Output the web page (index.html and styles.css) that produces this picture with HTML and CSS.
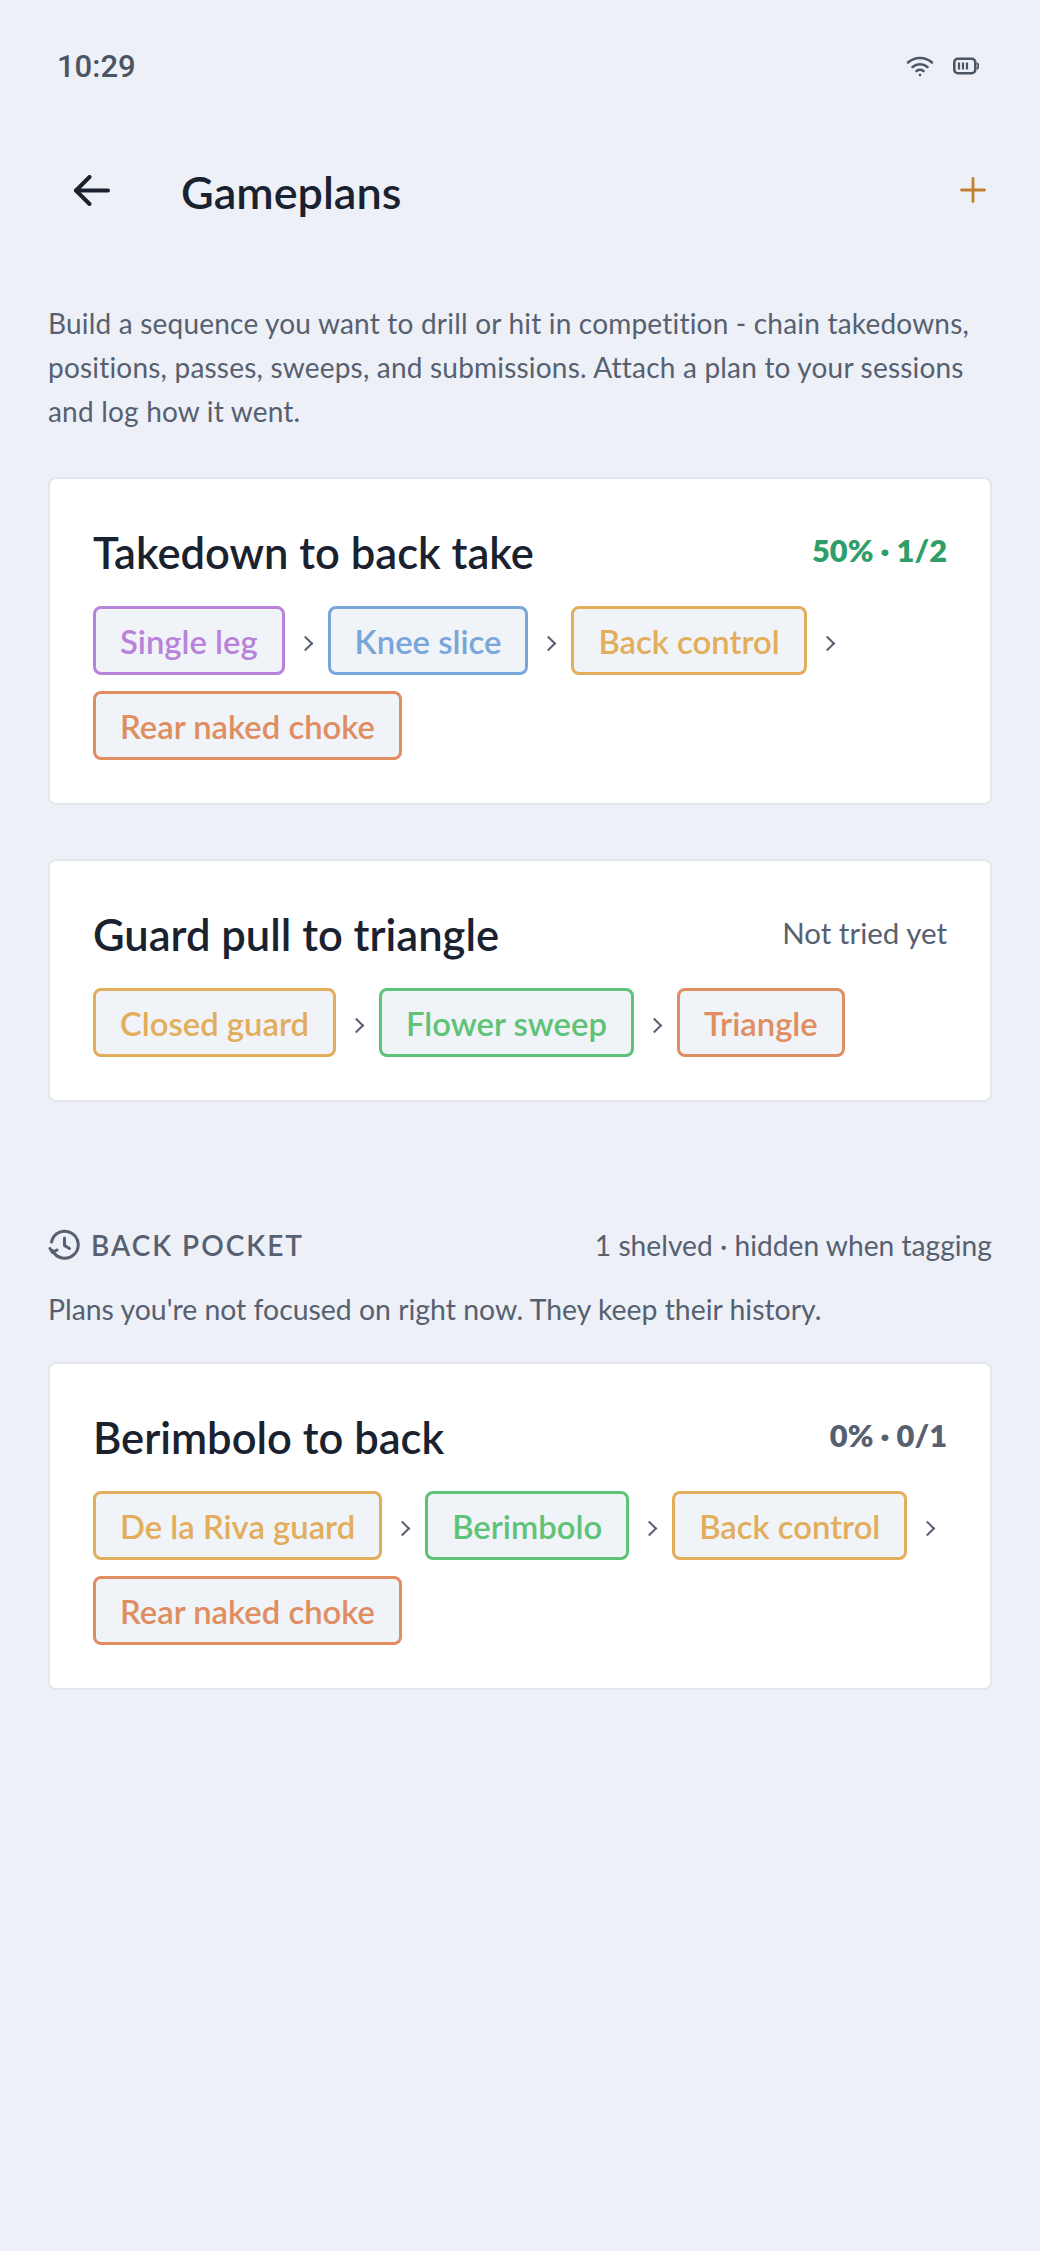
FILE: index.html
```html
<!DOCTYPE html>
<html lang="en">
<head>
  <meta charset="UTF-8" />
  <title>Gameplans</title>
  <link rel="stylesheet" href="styles.css">
</head>
<body>
  <div class="status-bar">
    <span class="time">10:29</span>
    <div class="status-icons">
      <svg width="28" height="22" viewBox="0 0 28 22" fill="none" stroke="#4b5563" stroke-width="2.6" stroke-linecap="round">
        <path d="M2 7.5C9 1.5 19 1.5 26 7.5"/>
        <path d="M6.5 12C11 8.3 17 8.3 21.500 12"/>
        <path d="M10.500 16C12.800 14.400 15.200 14.400 17.500 16"/>
        <circle cx="14" cy="20" r="1.300" fill="#4b5563" stroke="none"/>
      </svg>
      <svg width="26" height="18" viewBox="0 0 26 18" fill="none">
        <rect x="1.300" y="1.800" width="21" height="14.400" rx="3.500" stroke="#4b5563" stroke-width="2.600"/>
        <path d="M6 5.500V12.500M10 5.500V12.500M14 5.500V12.500" stroke="#4b5563" stroke-width="2.200"/>
        <path d="M24.600 6.500C25.500 8 25.500 10 24.600 11.500" stroke="#4b5563" stroke-width="1.800" stroke-linecap="round"/>
      </svg>
    </div>
  </div>

  <header class="top-bar">
    <div class="top-left">
      <svg class="back-icon" width="37" height="31" viewBox="0 0 37 31" fill="none" stroke="#1a2230" stroke-width="4" stroke-linecap="round" stroke-linejoin="round">
        <path d="M35 15.500H3"/>
        <path d="M16.500 2L3 15.500L16.500 29"/>
      </svg>
      <h1>Gameplans</h1>
    </div>
    <svg class="add-icon" width="26" height="26" viewBox="0 0 26 26" stroke="#c0802f" stroke-width="2.800" stroke-linecap="round">
      <path d="M13 1.500V24.500M1.500 13H24.500"/>
    </svg>
  </header>

  <p class="intro">Build a sequence you want to drill or hit in competition - chain takedowns, positions, passes, sweeps, and submissions. Attach a plan to your sessions and log how it went.</p>

  <section class="card">
    <div class="card-head">
      <h2>Takedown to back take</h2>
      <span class="stat stat-good">50% · 1/2</span>
    </div>
    <div class="chain">
      <div class="step"><span class="chip purple">Single leg</span><i class="sep"></i></div>
      <div class="step"><span class="chip blue">Knee slice</span><i class="sep"></i></div>
      <div class="step"><span class="chip yellow">Back control</span><i class="sep"></i></div>
      <div class="step"><span class="chip orange">Rear naked choke</span></div>
    </div>
  </section>

  <section class="card">
    <div class="card-head">
      <h2>Guard pull to triangle</h2>
      <span class="stat stat-none">Not tried yet</span>
    </div>
    <div class="chain">
      <div class="step"><span class="chip yellow">Closed guard</span><i class="sep"></i></div>
      <div class="step"><span class="chip green">Flower sweep</span><i class="sep"></i></div>
      <div class="step"><span class="chip orange">Triangle</span></div>
    </div>
  </section>

  <div class="pocket-head">
    <div class="pocket-title">
      <svg width="32" height="32" viewBox="0 0 32 32" fill="none" stroke="#566070" stroke-width="3" stroke-linecap="round" stroke-linejoin="round">
        <path d="M4.500 21.500A13.500 13.500 0 1 0 3.500 13"/>
        <path d="M2 19.500L4.500 23.500L9 21"/>
        <path d="M16.500 9V16.500L21.500 19.500"/>
      </svg>
      <span>BACK POCKET</span>
    </div>
    <span class="pocket-count">1 shelved · hidden when tagging</span>
  </div>
  <p class="pocket-note">Plans you're not focused on right now. They keep their history.</p>

  <section class="card">
    <div class="card-head">
      <h2>Berimbolo to back</h2>
      <span class="stat stat-muted">0% · 0/1</span>
    </div>
    <div class="chain">
      <div class="step"><span class="chip yellow">De la Riva guard</span><i class="sep"></i></div>
      <div class="step"><span class="chip green">Berimbolo</span><i class="sep"></i></div>
      <div class="step"><span class="chip yellow">Back control</span><i class="sep"></i></div>
      <div class="step"><span class="chip orange">Rear naked choke</span></div>
    </div>
  </section>
</body>
</html>
```

FILE: styles.css
```css
* {
  margin: 0;
  padding: 0;
  box-sizing: border-box;
  font-family: 'Lato', 'Noto Sans', sans-serif;
}

body {
  background: #edf0f7;
  min-height: 100vh;
  padding: 0 48px;
  color: #1a2230;
}

.status-bar {
  display: flex;
  align-items: center;
  justify-content: space-between;
  height: 132px;
  padding: 0 13px 0 9px;
}

.time {
  font-family: 'Roboto', sans-serif;
  font-size: 31px;
  font-weight: 500;
  color: #4b5563;
}

.status-icons {
  display: flex;
  align-items: center;
  gap: 19px;
}

.top-bar {
  display: flex;
  align-items: center;
  justify-content: space-between;
  height: 120px;
  padding: 0 6px 0 25px;
}

.top-left {
  display: flex;
  align-items: center;
  gap: 71px;
}

.back-icon,
.add-icon {
  margin-bottom: 4px;
}

.top-bar h1 {
  font-size: 45px;
  font-weight: 600;
}

.intro {
  margin-top: 49px;
  font-size: 28px;
  letter-spacing: 0.200px;
  line-height: 44px;
  color: #566070;
}

.card {
  margin-top: 54px;
  background: #fff;
  border: 2px solid #e3e6ec;
  border-radius: 8px;
  padding: 46px 43px 43px;
}

.intro + .card {
  margin-top: 44px;
}

.card-head {
  display: flex;
  justify-content: space-between;
  align-items: flex-start;
}

.card h2 {
  font-size: 43.500px;
  font-weight: 600;
  line-height: 54px;
  color: #1a2230;
}

.stat {
  font-size: 30.800px;
  line-height: 52px;
}

.stat-good {
  font-weight: 800;
  color: #2f9e68;
}

.stat-none {
  font-size: 29.500px;
  color: #566070;
}

.stat-muted {
  font-weight: 800;
  color: #566070;
}

.chain {
  display: flex;
  flex-wrap: wrap;
  row-gap: 16px;
  margin-top: 27px;
  margin-right: -6px;
}

.step {
  display: flex;
  align-items: center;
}

.chip {
  display: block;
  height: 69px;
  line-height: 66px;
  padding: 0 24px;
  border: 3px solid;
  border-radius: 8px;
  background: #f0f3f7;
  font-size: 32.800px;
  font-weight: 600;
}

.sep {
  display: block;
  width: 43px;
  height: 14px;
  position: relative;
}

/* chevron between two steps */
.sep::before {
  content: "";
  position: absolute;
  left: 15px;
  top: 4px;
  width: 9px;
  height: 9px;
  border-top: 2.500px solid #566070;
  border-right: 2.500px solid #566070;
  transform: rotate(45deg);
}

.purple { color: #b983dc; border-color: #b983dc; }
.blue { color: #78a6d9; border-color: #78a6d9; }
.yellow { color: #e2ae5b; border-color: #e2ae5b; }
.orange { color: #e08d62; border-color: #e08d62; }
.green { color: #5ec377; border-color: #5ec377; }

.pocket-head {
  display: flex;
  align-items: center;
  justify-content: space-between;
  margin-top: 126px;
}

.pocket-title {
  display: flex;
  align-items: center;
  gap: 11px;
  font-size: 28px;
  font-weight: 600;
  letter-spacing: 2px;
  color: #566070;
}

.pocket-count {
  font-size: 28.200px;
  color: #566070;
}

.pocket-note {
  margin-top: 30px;
  font-size: 28.400px;
  color: #566070;
}

.pocket-note + .card {
  margin-top: 36px;
}
```
